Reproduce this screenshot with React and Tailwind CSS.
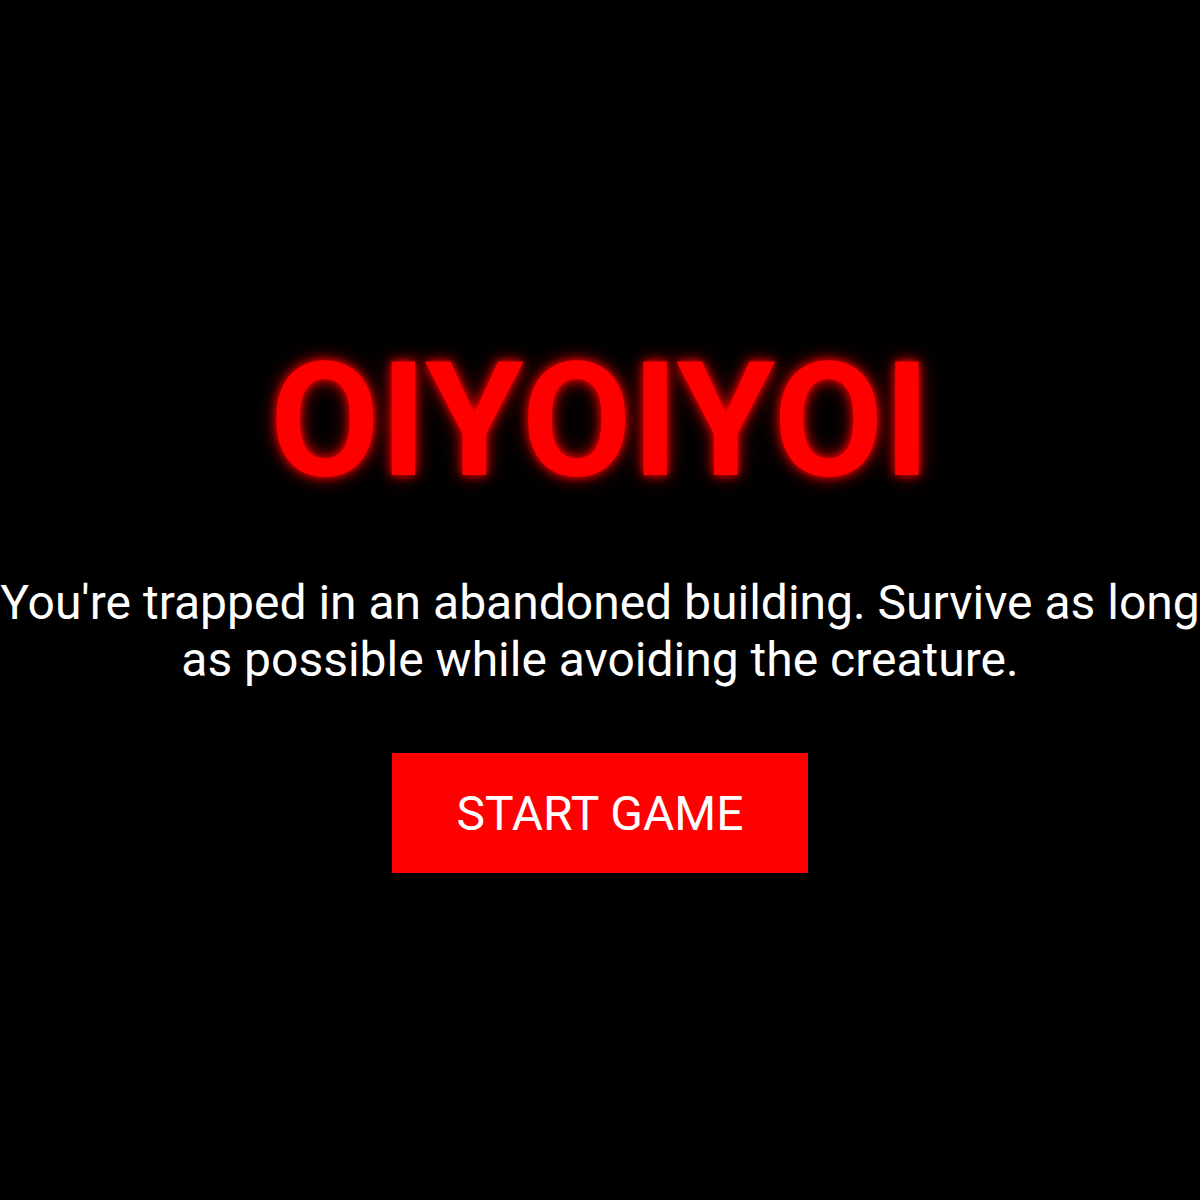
const App = () => {
  return (
    <div className="min-h-screen w-full bg-black flex flex-col items-center justify-center text-center font-['Roboto',sans-serif]">
      <h1 className="text-[160px] leading-[normal] font-bold text-[#ff0000] [text-shadow:0_0_10px_#ff0000,0_0_20px_rgba(255,0,0,0.6)] mb-[60px]">
        OIYOIYOI
      </h1>
      <p className="text-[48px] leading-[normal] text-white w-full mb-[65px]">
        You're trapped in an abandoned building. Survive as long as possible while avoiding the creature.
      </p>
      <button className="w-[416px] h-[120px] bg-[#ff0000] text-white text-[48px] leading-[normal]">
        START GAME
      </button>
    </div>
  );
};

export default App;
